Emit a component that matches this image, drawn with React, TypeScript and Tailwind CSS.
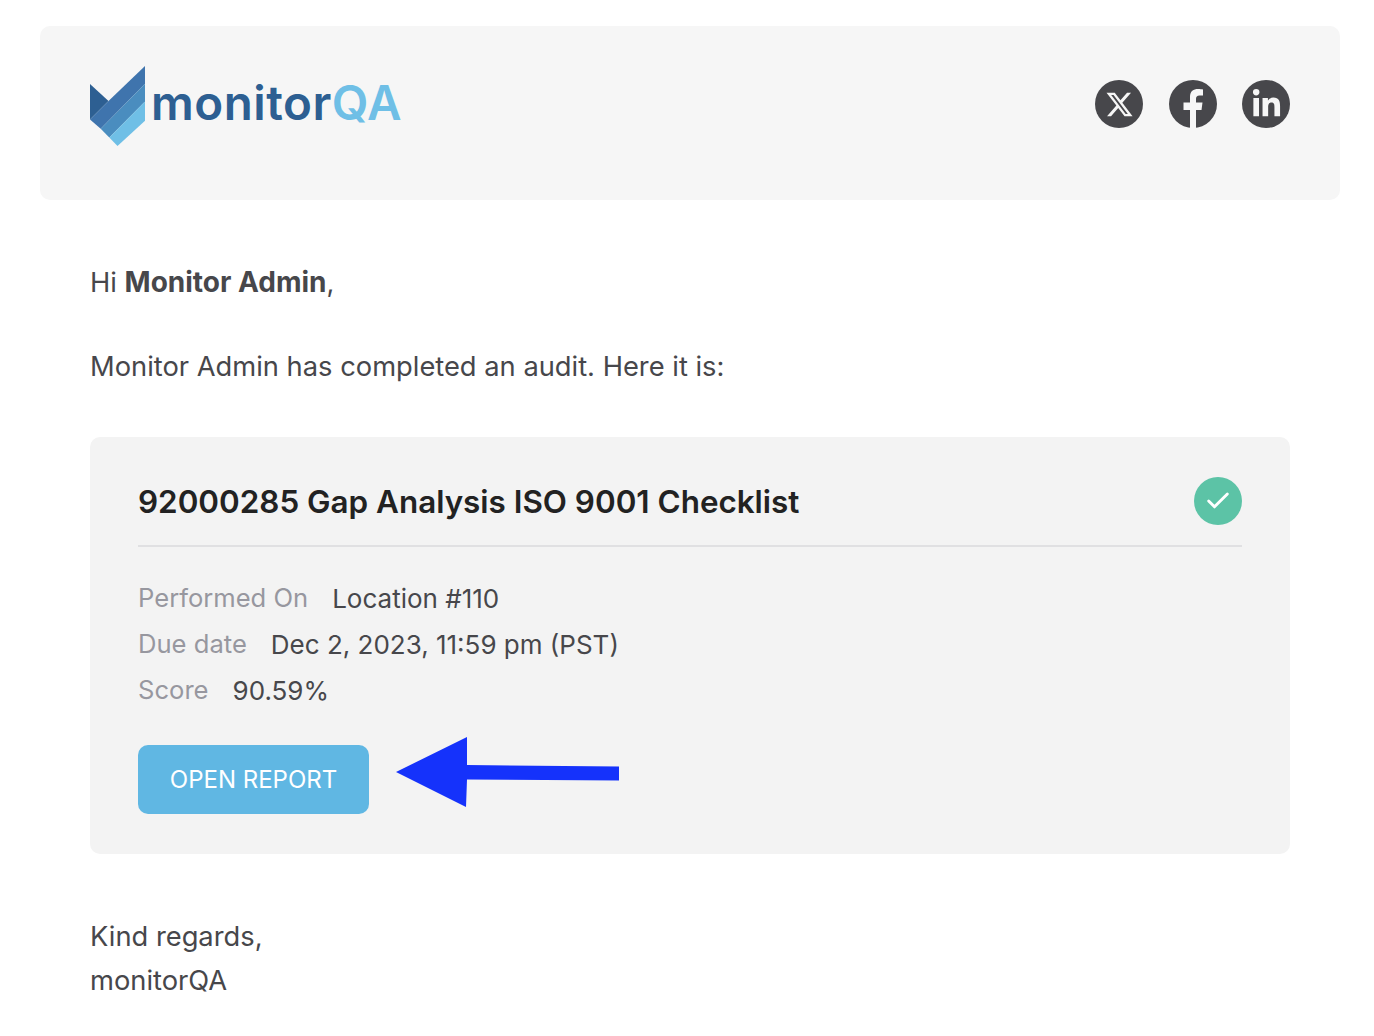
import { FaLinkedinIn, FaXTwitter } from 'react-icons/fa6';
import { Check } from 'lucide-react';

function Logo() {
    return (
        <div className="flex items-start">
            <svg width="55" height="80" viewBox="0 0 55 80" className="shrink-0">
                <polygon points="0,18 18.5,35 0,53.5" fill="#2d5f92" />
                <polygon points="0,53.5 18.5,35 55,0 55,17.7 10.7,62.7" fill="#3f74ad" />
                <polygon points="55,17.7 55,35.5 19.3,71.5 10.7,62.7" fill="#4a8dbf" />
                <polygon points="55,35.5 55,54.7 27.5,80 19.3,71.5" fill="#6fbfe6" />
            </svg>
            <div className="ml-[6px] mt-[7px] text-[47.5px] leading-[60px] font-semibold tracking-[0.5px] text-[#2d5f92]">
                monitor<span className="text-[#6fbfe6]">QA</span>
            </div>
        </div>
    );
}

function SocialIcons() {
    return (
        <div className="flex items-center gap-[26px]">
            <div className="w-12 h-12 rounded-full bg-[#47474b] flex items-center justify-center text-[#f6f6f6]">
                <FaXTwitter size={29} />
            </div>
            <svg width="48" height="48" viewBox="0 0 48 48">
                <circle cx="24" cy="24" r="24" fill="#47474b" />
                <path
                    d="M21 48V30H14.5V22.5H21V17C21 11 24.5 9 29 9C31 9 33 9.3 34 9.5V15.5H30.5C28 15.5 27 17 27 19V22.5H33.5L32.5 30H27V48Z"
                    fill="#f6f6f6"
                />
            </svg>
            <div className="-ml-px w-12 h-12 rounded-full bg-[#47474b] flex items-center justify-center text-[#f6f6f6]">
                <FaLinkedinIn size={31} />
            </div>
        </div>
    );
}

function InfoRow({ label, value }: { label: string; value: string }) {
    return (
        <div className="flex gap-[24px] h-[46px] items-center">
            <span className="text-[#97979f] text-[25.6px]">{label}</span>
            <span>{value}</span>
        </div>
    );
}

export default function App() {
    return (
        <div className="min-h-[1036px] bg-white px-[40px] pt-[26px] w-[1380px] text-[27.3px] text-[#47474b] font-['Inter',sans-serif]">
            <header className="h-[174px] bg-[#f6f6f6] rounded-[10px] pl-[50px] pr-[50px] pt-[40px] flex justify-between items-start">
                <Logo />
                <div className="pt-[14px]">
                    <SocialIcons />
                </div>
            </header>

            <main className="px-[50px] pt-[60px]">
                <p className="leading-[44px]">
                    Hi <strong className="font-bold text-[28px]">Monitor Admin</strong>,
                </p>
                <p className="leading-[44px] mt-[40px]">Monitor Admin has completed an audit. Here it is:</p>

                <section className="mt-[48px] bg-[#f3f3f3] rounded-[10px] px-[48px] pt-[40px] h-[417px]">
                    <div className="flex justify-between items-center h-[48px]">
                        <h1 className="text-[31.4px] font-semibold text-[#222222] pt-[3px]">92000285 Gap Analysis ISO 9001 Checklist</h1>
                        <div className="w-12 h-12 rounded-full bg-[#5cc3a6] flex items-center justify-center text-white">
                            <Check size={28} strokeWidth={2.5} />
                        </div>
                    </div>
                    <div className="mt-[20px] h-[2px] bg-[#e0e0e2]" />
                    <div className="mt-[28px] text-[26px]">
                        <InfoRow label="Performed On" value="Location #110" />
                        <InfoRow label="Due date" value="Dec 2, 2023, 11:59 pm (PST)" />
                        <InfoRow label="Score" value="90.59%" />
                    </div>
                    <div className="relative mt-[32px] w-fit">
                        <button className="w-[231px] h-[69px] rounded-[10px] bg-[#60b7e3] text-white text-[24px] block">OPEN REPORT</button>
                        <svg width="224" height="72" viewBox="0 0 224 72" className="absolute left-[258px] top-[-8px]">
                            <polygon points="0,35 71,0 71,28 223,29.5 223,43.5 71,42.5 70,70" fill="#1532fb" />
                        </svg>
                    </div>
                </section>

                <p className="leading-[44px] mt-[61px]">
                    Kind regards,
                    <br />
                    monitorQA
                </p>
            </main>
        </div>
    );
}
